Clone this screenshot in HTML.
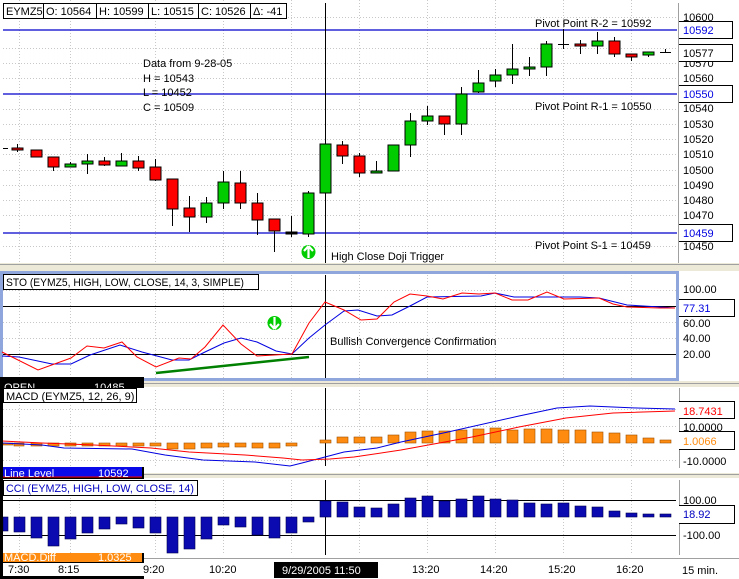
<!DOCTYPE html>
<html><head><meta charset="utf-8"><style>
html,body{margin:0;padding:0;background:#fff;}
svg{display:block;font-family:"Liberation Sans",sans-serif;font-size:11px;}
</style></head><body>
<svg width="739" height="579" viewBox="0 0 739 579" xmlns="http://www.w3.org/2000/svg">
<rect width="739" height="579" fill="#fff"/>
<g stroke="#c8c8c8" stroke-dasharray="1,2" stroke-width="1">
<line x1="3" y1="48.5" x2="676" y2="48.5"/><line x1="3" y1="63.5" x2="676" y2="63.5"/><line x1="3" y1="78.5" x2="676" y2="78.5"/>
<line x1="3" y1="109.5" x2="676" y2="109.5"/><line x1="3" y1="124.5" x2="676" y2="124.5"/><line x1="3" y1="139.5" x2="676" y2="139.5"/>
<line x1="3" y1="154.5" x2="676" y2="154.5"/><line x1="3" y1="170.5" x2="676" y2="170.5"/><line x1="3" y1="185.5" x2="676" y2="185.5"/>
<line x1="3" y1="200.5" x2="676" y2="200.5"/><line x1="3" y1="215.5" x2="676" y2="215.5"/><line x1="3" y1="246.5" x2="676" y2="246.5"/>
<line x1="3" y1="17.5" x2="676" y2="17.5"/>
<line x1="19.5" y1="0" x2="19.5" y2="263"/><line x1="70.5" y1="0" x2="70.5" y2="263"/><line x1="155.5" y1="0" x2="155.5" y2="263"/>
<line x1="223.5" y1="0" x2="223.5" y2="263"/><line x1="291.5" y1="0" x2="291.5" y2="263"/><line x1="359.5" y1="0" x2="359.5" y2="263"/>
<line x1="427.5" y1="0" x2="427.5" y2="263"/><line x1="495.5" y1="0" x2="495.5" y2="263"/><line x1="563.5" y1="0" x2="563.5" y2="263"/><line x1="631.5" y1="0" x2="631.5" y2="263"/>
</g>
<g stroke="#0000cc" stroke-width="1.2">
<line x1="3" y1="30" x2="677" y2="30"/><line x1="3" y1="94" x2="677" y2="94"/><line x1="3" y1="233" x2="677" y2="233"/>
</g>
<line x1="325.5" y1="3" x2="325.5" y2="263" stroke="#000"/>
<g stroke="#000" stroke-width="1">
<line x1="3" y1="148.5" x2="8" y2="148.5"/>
<line x1="17.5" y1="144" x2="17.5" y2="152"/><rect x="12" y="148" width="11" height="2" fill="#f00"/>
<rect x="31" y="150" width="11" height="7" fill="#f00"/>
<line x1="53.5" y1="157" x2="53.5" y2="171"/><rect x="48" y="157" width="11" height="10" fill="#f00"/>
<line x1="70.5" y1="162" x2="70.5" y2="167"/><rect x="65" y="164" width="11" height="3" fill="#0c0"/>
<line x1="87.5" y1="154" x2="87.5" y2="174"/><rect x="82" y="161" width="11" height="3" fill="#0c0"/>
<line x1="104.5" y1="157" x2="104.5" y2="166"/><rect x="99" y="161" width="11" height="4" fill="#f00"/>
<line x1="121.5" y1="153" x2="121.5" y2="166"/><rect x="116" y="161" width="11" height="5" fill="#0c0"/>
<line x1="138.5" y1="156" x2="138.5" y2="171"/><rect x="133" y="161" width="11" height="7" fill="#f00"/>
<line x1="155.5" y1="159" x2="155.5" y2="181"/><rect x="150" y="167" width="11" height="13" fill="#f00"/>
<line x1="172.5" y1="179" x2="172.5" y2="226"/><rect x="167" y="179" width="11" height="30" fill="#f00"/>
<line x1="189.5" y1="196" x2="189.5" y2="232"/><rect x="184" y="208" width="11" height="9" fill="#f00"/>
<line x1="206.5" y1="197" x2="206.5" y2="223"/><rect x="201" y="203" width="11" height="14" fill="#0c0"/>
<line x1="223.5" y1="171" x2="223.5" y2="209"/><rect x="218" y="182" width="11" height="21" fill="#0c0"/>
<line x1="240.5" y1="171" x2="240.5" y2="209"/><rect x="235" y="183" width="11" height="20" fill="#f00"/>
<line x1="257.5" y1="193" x2="257.5" y2="235"/><rect x="252" y="203" width="11" height="17" fill="#f00"/>
<line x1="274.5" y1="219" x2="274.5" y2="252"/><rect x="269" y="219" width="11" height="12" fill="#f00"/>
<line x1="291.5" y1="216" x2="291.5" y2="237"/><rect x="286" y="232" width="11" height="2" fill="#000"/>
<line x1="308.5" y1="191" x2="308.5" y2="237"/><rect x="303" y="193" width="11" height="41" fill="#0c0"/>
<rect x="320" y="144" width="11" height="49" fill="#0c0"/>
<line x1="342.5" y1="141" x2="342.5" y2="164"/><rect x="337" y="145" width="11" height="11" fill="#f00"/>
<line x1="359.5" y1="153" x2="359.5" y2="177"/><rect x="354" y="156" width="11" height="17" fill="#f00"/>
<line x1="376.5" y1="161" x2="376.5" y2="173"/><rect x="371" y="171" width="11" height="2" fill="#0c0"/>
<rect x="388" y="145" width="11" height="26" fill="#0c0"/>
<line x1="410.5" y1="113" x2="410.5" y2="157"/><rect x="405" y="121" width="11" height="24" fill="#0c0"/>
<line x1="427.5" y1="106" x2="427.5" y2="125"/><rect x="422" y="116" width="11" height="5" fill="#0c0"/>
<line x1="444.5" y1="116" x2="444.5" y2="135"/><rect x="439" y="116" width="11" height="8" fill="#f00"/>
<line x1="461.5" y1="87" x2="461.5" y2="135"/><rect x="456" y="94" width="11" height="30" fill="#0c0"/>
<line x1="478.5" y1="70" x2="478.5" y2="93"/><rect x="473" y="83" width="11" height="9" fill="#0c0"/>
<line x1="495.5" y1="69" x2="495.5" y2="87"/><rect x="490" y="75" width="11" height="6" fill="#0c0"/>
<line x1="512.5" y1="44" x2="512.5" y2="84"/><rect x="507" y="69" width="11" height="6" fill="#0c0"/>
<line x1="529.5" y1="57" x2="529.5" y2="76"/><rect x="524" y="67" width="11" height="2" fill="#0c0"/>
<line x1="546.5" y1="41" x2="546.5" y2="76"/><rect x="541" y="44" width="11" height="23" fill="#0c0"/>
<line x1="563.5" y1="29" x2="563.5" y2="49"/><line x1="558" y1="44.5" x2="569" y2="44.5"/>
<line x1="580.5" y1="40" x2="580.5" y2="54"/><rect x="575" y="44" width="11" height="2" fill="#f00"/>
<line x1="597.5" y1="32" x2="597.5" y2="54"/><rect x="592" y="41" width="11" height="5" fill="#0c0"/>
<line x1="614.5" y1="37" x2="614.5" y2="57"/><rect x="609" y="41" width="11" height="13" fill="#f00"/>
<line x1="631.5" y1="54" x2="631.5" y2="61"/><rect x="626" y="54" width="11" height="3" fill="#f00"/>
<line x1="648.5" y1="52" x2="648.5" y2="57"/><rect x="643" y="52" width="11" height="3" fill="#0c0"/>
<line x1="665.5" y1="49" x2="665.5" y2="52"/><line x1="660" y1="52.5" x2="671" y2="52.5"/>
</g>
<g fill="#fff" stroke="#000">
<rect x="3.5" y="3.5" width="40" height="15"/><rect x="43.5" y="3.5" width="53" height="15"/><rect x="96.5" y="3.5" width="52" height="15"/>
<rect x="148.5" y="3.5" width="50" height="15"/><rect x="198.5" y="3.5" width="52" height="15"/><rect x="250.5" y="3.5" width="36" height="15"/>
</g>
<g fill="#000">
<text x="6" y="15">EYMZ5</text><text x="46" y="15">O: 10564</text><text x="99" y="15">H: 10599</text>
<text x="151" y="15">L: 10515</text><text x="201" y="15">C: 10526</text><text x="253" y="15">Δ: -41</text>
<text x="143" y="67">Data from 9-28-05</text><text x="143" y="82">H = 10543</text><text x="143" y="96">L = 10452</text><text x="143" y="111">C = 10509</text>
<text x="535" y="27">Pivot Point R-2 = 10592</text><text x="535" y="110">Pivot Point R-1 = 10550</text><text x="535" y="249">Pivot Point S-1 = 10459</text>
<text x="331" y="260">High Close Doji Trigger</text>
</g>
<circle cx="308.5" cy="252" r="7" fill="#0c0"/>
<path d="M308.5 246 L304 251 M308.5 246 L313 251 M308.5 246 V258" stroke="#fff" stroke-width="2.2" fill="none"/>
<line x1="678.5" y1="3" x2="678.5" y2="263" stroke="#a0a0a0"/>
<g fill="#000">
<text x="683" y="21">10600</text><text x="683" y="67">10570</text><text x="683" y="82">10560</text>
<text x="683" y="112">10540</text><text x="683" y="128">10530</text><text x="683" y="143">10520</text><text x="683" y="158">10510</text>
<text x="683" y="174">10500</text><text x="683" y="189">10490</text><text x="683" y="204">10480</text><text x="683" y="219">10470</text><text x="683" y="250">10450</text>
</g>
<g fill="#fff" stroke="#000">
<path d="M679 21.5 H732.5 V38.5 H679"/><path d="M679 44.5 H732.5 V61.5 H679"/><path d="M679 85.5 H732.5 V102.5 H679"/><path d="M679 224.5 H732.5 V241.5 H679"/>
</g>
<text x="683" y="34" fill="#0000e0">10592</text><text x="683" y="57" fill="#000">10577</text>
<text x="683" y="98" fill="#0000e0">10550</text><text x="683" y="237" fill="#0000e0">10459</text>
<rect x="0" y="263" width="739" height="8" fill="#ece9d8"/>
<line x1="0" y1="264.5" x2="739" y2="264.5" stroke="#a0a0a0"/>
<rect x="1.5" y="272.5" width="676" height="107" fill="#fff" stroke="#8ea6dc" stroke-width="3"/>
<g stroke="#c8c8c8" stroke-dasharray="1,2">
<line x1="3" y1="290.5" x2="676" y2="290.5"/><line x1="3" y1="322.5" x2="676" y2="322.5"/><line x1="3" y1="338.5" x2="676" y2="338.5"/>
<line x1="19.5" y1="275" x2="19.5" y2="378"/><line x1="70.5" y1="275" x2="70.5" y2="378"/><line x1="155.5" y1="275" x2="155.5" y2="378"/><line x1="223.5" y1="275" x2="223.5" y2="378"/><line x1="291.5" y1="275" x2="291.5" y2="378"/><line x1="359.5" y1="275" x2="359.5" y2="378"/><line x1="427.5" y1="275" x2="427.5" y2="378"/><line x1="495.5" y1="275" x2="495.5" y2="378"/><line x1="563.5" y1="275" x2="563.5" y2="378"/><line x1="631.5" y1="275" x2="631.5" y2="378"/>
</g>
<line x1="3" y1="306.5" x2="676" y2="306.5" stroke="#000"/><line x1="3" y1="354.5" x2="676" y2="354.5" stroke="#000"/>
<line x1="325.5" y1="275" x2="325.5" y2="378" stroke="#000"/>
<polyline fill="none" stroke="#0000e0" points="2,356 19,357 52,364 71,364 90,355 120,345 142,352 172,360 189,360 205,352 224,343 241,338 257,342 276,351 292,354 309,338 325,325 344,311 358,310 377,316 392,315 410,306 427,297 481,296 495,293 514,297 580,297 599,298 627,305 660,307 675,308"/>
<polyline fill="none" stroke="#f00" points="2,352 38,370 71,358 87,346 104,348 122,342 137,357 156,367 179,358 191,359 205,347 223,325 241,344 257,356 274,355 292,354 309,323 325,302 344,310 361,320 377,319 394,302 410,294 427,296 443,299 462,293 479,294 495,293 512,300 528,300 547,292 564,299 599,298 613,304 627,307 660,308 675,308"/>
<line x1="156" y1="373" x2="309" y2="357" stroke="#008000" stroke-width="2.5"/>
<circle cx="274.5" cy="323" r="7" fill="#0c0"/>
<path d="M274.5 329 L270 324 M274.5 329 L279 324 M274.5 329 V317" stroke="#fff" stroke-width="2.2" fill="none"/>
<text x="330" y="345">Bullish Convergence Confirmation</text>
<rect x="3.5" y="274.5" width="255" height="15" fill="#fff" stroke="#000"/>
<text x="6" y="286" textLength="238" lengthAdjust="spacingAndGlyphs">STO (EYMZ5, HIGH, LOW, CLOSE, 14, 3, SIMPLE)</text>
<g fill="#000"><text x="683" y="293">100.00</text><text x="683" y="327">60.00</text><text x="683" y="342">40.00</text><text x="683" y="358">20.00</text></g>
<path d="M679 299.5 H734.5 V316.5 H679" fill="#fff" stroke="#000"/>
<text x="683" y="312" fill="#0000e0">77.31</text>
<rect x="0" y="381" width="739" height="6" fill="#ece9d8"/><line x1="144" y1="383.5" x2="739" y2="383.5" stroke="#a0a0a0"/>
<rect x="0" y="377" width="144" height="11" fill="#000"/>
<svg x="0" y="377" width="142" height="11"><text x="4" y="14" fill="#fff">OPEN</text><text x="94" y="14" fill="#fff">10485</text></svg>
<g stroke="#c8c8c8" stroke-dasharray="1,2">
<line x1="3" y1="409.5" x2="676" y2="409.5"/><line x1="3" y1="426.5" x2="676" y2="426.5"/><line x1="3" y1="460.5" x2="676" y2="460.5"/>
<line x1="19.5" y1="390" x2="19.5" y2="466"/><line x1="70.5" y1="390" x2="70.5" y2="466"/><line x1="155.5" y1="390" x2="155.5" y2="466"/><line x1="223.5" y1="390" x2="223.5" y2="466"/><line x1="291.5" y1="390" x2="291.5" y2="466"/><line x1="359.5" y1="390" x2="359.5" y2="466"/><line x1="427.5" y1="390" x2="427.5" y2="466"/><line x1="495.5" y1="390" x2="495.5" y2="466"/><line x1="563.5" y1="390" x2="563.5" y2="466"/><line x1="631.5" y1="390" x2="631.5" y2="466"/>
</g>
<line x1="325.5" y1="388" x2="325.5" y2="466" stroke="#000"/>
<g fill="#ff8c10" stroke="#a05000" stroke-width="0.6">
<rect x="3" y="443" width="10" height="2"/><rect x="14" y="443" width="10" height="3"/>
<rect x="31" y="443" width="11" height="3"/><rect x="48" y="443" width="11" height="3"/><rect x="65" y="443" width="11" height="3"/><rect x="82" y="443" width="11" height="3"/>
<rect x="99" y="443" width="11" height="3"/><rect x="116" y="443" width="11" height="3"/><rect x="133" y="443" width="11" height="3"/><rect x="150" y="443" width="11" height="3"/>
<rect x="167" y="443" width="11" height="6"/><rect x="184" y="443" width="11" height="6"/><rect x="201" y="443" width="11" height="5"/><rect x="218" y="443" width="11" height="4"/>
<rect x="235" y="443" width="11" height="4"/><rect x="252" y="443" width="11" height="5"/><rect x="269" y="443" width="11" height="5"/><rect x="286" y="443" width="11" height="3"/>
<rect x="320" y="440" width="11" height="3"/><rect x="337" y="437" width="11" height="6"/><rect x="354" y="437" width="11" height="6"/><rect x="371" y="437" width="11" height="6"/>
<rect x="388" y="435" width="11" height="8"/><rect x="405" y="432" width="11" height="11"/><rect x="422" y="431" width="11" height="12"/><rect x="439" y="431" width="11" height="12"/>
<rect x="456" y="430" width="11" height="13"/><rect x="473" y="429" width="11" height="14"/><rect x="490" y="428" width="11" height="15"/><rect x="507" y="430" width="11" height="13"/>
<rect x="524" y="429" width="11" height="14"/><rect x="541" y="429" width="11" height="14"/><rect x="558" y="430" width="11" height="13"/><rect x="575" y="430" width="11" height="13"/>
<rect x="592" y="432" width="11" height="11"/><rect x="609" y="433" width="11" height="10"/><rect x="626" y="435" width="11" height="8"/><rect x="643" y="438" width="11" height="5"/><rect x="660" y="440" width="11" height="3"/>
</g>
<polyline fill="none" stroke="#0000e0" points="2,443 42,445 64,448 132,449 165,455 203,460 255,462 290,466 302,463 325,457 344,452 377,448 401,442 448,432 519,416 557,408 590,406 637,408 675,409"/>
<polyline fill="none" stroke="#f00" points="2,441 42,443 94,445 151,448 189,452 245,455 283,458 302,460 330,459 354,457 401,450 472,437 519,427 566,418 613,413 675,411"/>
<rect x="3.5" y="388.5" width="133" height="14" fill="#fff" stroke="#000"/>
<text x="6" y="400">MACD (EYMZ5, 12, 26, 9)</text>
<line x1="679.5" y1="388" x2="679.5" y2="468" stroke="#a0a0a0"/>
<g fill="#000"><text x="683" y="431">10.0000</text><text x="683" y="465">-10.0000</text></g>
<path d="M679 401.5 H734.5 V418.5 H679" fill="#fff" stroke="#000"/><path d="M679 431.5 H734.5 V449.5 H679" fill="#fff" stroke="#000"/>
<text x="683" y="415" fill="#f00">18.7431</text><text x="683" y="445" fill="#ff8c10">1.0066</text>
<rect x="0" y="473" width="739" height="5" fill="#ece9d8"/><line x1="144" y1="474.5" x2="739" y2="474.5" stroke="#a0a0a0"/>
<rect x="0" y="467" width="144" height="12" fill="#000"/>
<rect x="3" y="467" width="139" height="10" fill="#0a0ae8"/><line x1="3" y1="477" x2="142" y2="477" stroke="#f00"/>
<svg x="3" y="467" width="139" height="10"><text x="1" y="10" fill="#fff">Line Level</text><text x="95" y="10" fill="#fff">10592</text></svg>
<g stroke="#c8c8c8" stroke-dasharray="1,2">
<line x1="19.5" y1="480" x2="19.5" y2="553"/><line x1="70.5" y1="480" x2="70.5" y2="553"/><line x1="155.5" y1="480" x2="155.5" y2="553"/><line x1="223.5" y1="480" x2="223.5" y2="553"/><line x1="291.5" y1="480" x2="291.5" y2="553"/><line x1="359.5" y1="480" x2="359.5" y2="553"/><line x1="427.5" y1="480" x2="427.5" y2="553"/><line x1="495.5" y1="480" x2="495.5" y2="553"/><line x1="563.5" y1="480" x2="563.5" y2="553"/><line x1="631.5" y1="480" x2="631.5" y2="553"/>
</g>
<line x1="3" y1="500.5" x2="676" y2="500.5" stroke="#000"/><line x1="3" y1="535.5" x2="676" y2="535.5" stroke="#000"/>
<line x1="325.5" y1="480" x2="325.5" y2="555" stroke="#000"/>
<g fill="#0a0ab0" stroke="#000050" stroke-width="0.6">
<rect x="3" y="517" width="5" height="14"/><rect x="14" y="517" width="11" height="15"/><rect x="31" y="517" width="11" height="21"/><rect x="48" y="517" width="11" height="29"/>
<rect x="65" y="517" width="11" height="22"/><rect x="82" y="517" width="11" height="16"/><rect x="99" y="517" width="11" height="12"/><rect x="116" y="517" width="11" height="7"/>
<rect x="133" y="517" width="11" height="11"/><rect x="150" y="517" width="11" height="16"/><rect x="167" y="517" width="11" height="36"/><rect x="184" y="517" width="11" height="32"/>
<rect x="201" y="517" width="11" height="22"/><rect x="218" y="517" width="11" height="8"/><rect x="235" y="517" width="11" height="10"/><rect x="252" y="517" width="11" height="18"/>
<rect x="269" y="517" width="11" height="21"/><rect x="286" y="517" width="11" height="16"/><rect x="303" y="517" width="11" height="5"/>
<rect x="320" y="501" width="11" height="16"/><rect x="337" y="502" width="11" height="15"/><rect x="354" y="507" width="11" height="10"/><rect x="371" y="508" width="11" height="9"/>
<rect x="388" y="504" width="11" height="13"/><rect x="405" y="498" width="11" height="19"/><rect x="422" y="496" width="11" height="21"/><rect x="439" y="501" width="11" height="16"/>
<rect x="456" y="499" width="11" height="18"/><rect x="473" y="496" width="11" height="21"/><rect x="490" y="499" width="11" height="18"/><rect x="507" y="500" width="11" height="17"/>
<rect x="524" y="503" width="11" height="14"/><rect x="541" y="504" width="11" height="13"/><rect x="558" y="503" width="11" height="14"/><rect x="575" y="506" width="11" height="11"/>
<rect x="592" y="507" width="11" height="10"/><rect x="609" y="511" width="11" height="6"/><rect x="626" y="513" width="11" height="4"/><rect x="643" y="514" width="11" height="3"/><rect x="660" y="514" width="11" height="3"/>
</g>
<rect x="3.5" y="480.5" width="194" height="15" fill="#fff" stroke="#000"/>
<text x="6" y="492" fill="#0000c0" textLength="188" lengthAdjust="spacingAndGlyphs">CCI (EYMZ5, HIGH, LOW, CLOSE, 14)</text>
<line x1="679.5" y1="480" x2="679.5" y2="555" stroke="#a0a0a0"/>
<g fill="#000"><text x="683" y="504">100.00</text><text x="683" y="539">-100.00</text></g>
<path d="M679 505.5 H734.5 V523.5 H679" fill="#fff" stroke="#000"/>
<text x="683" y="518" fill="#0000c0">18.92</text>
<line x1="144" y1="558.5" x2="739" y2="558.5" stroke="#a0a0a0"/>
<rect x="0" y="553" width="144" height="10" fill="#000"/>
<rect x="3" y="553" width="139" height="9" fill="#ff8c10"/>
<svg x="3" y="553" width="139" height="9"><text x="1" y="8" fill="#fff">MACD.Diff</text><text x="95" y="8" fill="#fff">1.0325</text></svg>
<rect x="0" y="377" width="3" height="202" fill="#000"/>
<rect x="0" y="576" width="144" height="3" fill="#000"/>
<g fill="#000"><text x="8" y="573">7:30</text><text x="58" y="573">8:15</text><text x="143" y="573">9:20</text><text x="209" y="573">10:20</text>
<text x="412" y="573">13:20</text><text x="480" y="573">14:20</text><text x="548" y="573">15:20</text><text x="616" y="573">16:20</text><text x="682" y="574">15 min.</text></g>
<rect x="274" y="562" width="104" height="16" fill="#000"/>
<text x="282" y="574" fill="#fff">9/29/2005 11:50</text>
</svg>
</body></html>
